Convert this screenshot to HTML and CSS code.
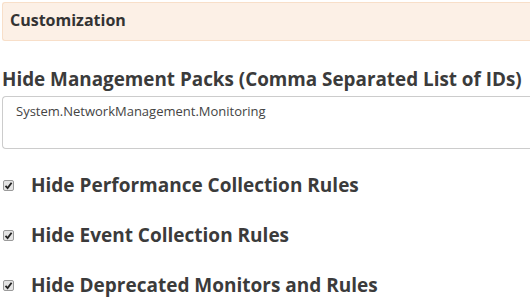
FILE: index.html
```html
<!DOCTYPE html>
<html lang="en">

<head>
  <meta charset="UTF-8">
  <title>Customization</title>
  <link rel="stylesheet" href="styles.css">
</head>

<body>

  <div class="panel-heading">Customization</div>

  <div class="field">
    <label class="field-label">Hide Management Packs (Comma Separated List of IDs)</label>
    <div class="textbox">System.NetworkManagement.Monitoring</div>
  </div>

  <div class="checks">
    <label class="check-row">
      <span class="checkbox"><svg viewBox="0 0 11 11" width="11" height="11"><path d="M2.5 5.8 L4.6 8 L8.6 2.8" fill="none" stroke="#222" stroke-width="1.8"/></svg></span>
      <span class="check-label">Hide Performance Collection Rules</span>
    </label>
    <label class="check-row">
      <span class="checkbox"><svg viewBox="0 0 11 11" width="11" height="11"><path d="M2.5 5.8 L4.6 8 L8.6 2.8" fill="none" stroke="#222" stroke-width="1.8"/></svg></span>
      <span class="check-label">Hide Event Collection Rules</span>
    </label>
    <label class="check-row">
      <span class="checkbox"><svg viewBox="0 0 11 11" width="11" height="11"><path d="M2.5 5.8 L4.6 8 L8.6 2.8" fill="none" stroke="#222" stroke-width="1.8"/></svg></span>
      <span class="check-label">Hide Deprecated Monitors and Rules</span>
    </label>
  </div>

</body>

</html>
```

FILE: styles.css
```css
* {
  font-family: 'Open Sans', sans-serif;
  box-sizing: border-box;
}

body {
  margin: 0;
  padding: 2px 0 0 2px;
  color: #3b3b3b;
  background: #fff;
}

/* panel and textbox are cut off by the frame on the right */
.panel-heading {
  background-color: #fcf0e6;
  border: 1px solid #f8dfc9;
  border-right: none;
  border-radius: 3px 0 0 3px;
  height: 39px;
  padding: 6px 7px;
  font-size: 16px;
  font-weight: 700;
  color: #333;
}

.field {
  margin-top: 25px;
}

.field-label {
  display: block;
  font-size: 18.85px;
  font-weight: 700;
  line-height: 26px;
  white-space: nowrap;
}

.textbox {
  margin-top: 4px;
  height: 53px;
  border: 1px solid #cccccc;
  border-right: none;
  border-radius: 4px 0 0 4px;
  padding: 5px 13px;
  font-size: 13px;
  color: #444;
}

.checks {
  margin-top: 21px;
  display: flex;
  flex-direction: column;
  gap: 20px;
}

.check-row {
  display: flex;
  align-items: center;
  height: 30px;
}

.checkbox {
  width: 11px;
  height: 11px;
  margin: 0 17px 0 1px;
  background: #e4e4e4;
  border: 1px solid #9a9a9a;
  border-radius: 2px;
  display: flex;
  align-items: center;
  justify-content: center;
}

.checkbox svg {
  display: block;
  flex: none;
}

.check-label {
  font-size: 19px;
  font-weight: 700;
}
```
